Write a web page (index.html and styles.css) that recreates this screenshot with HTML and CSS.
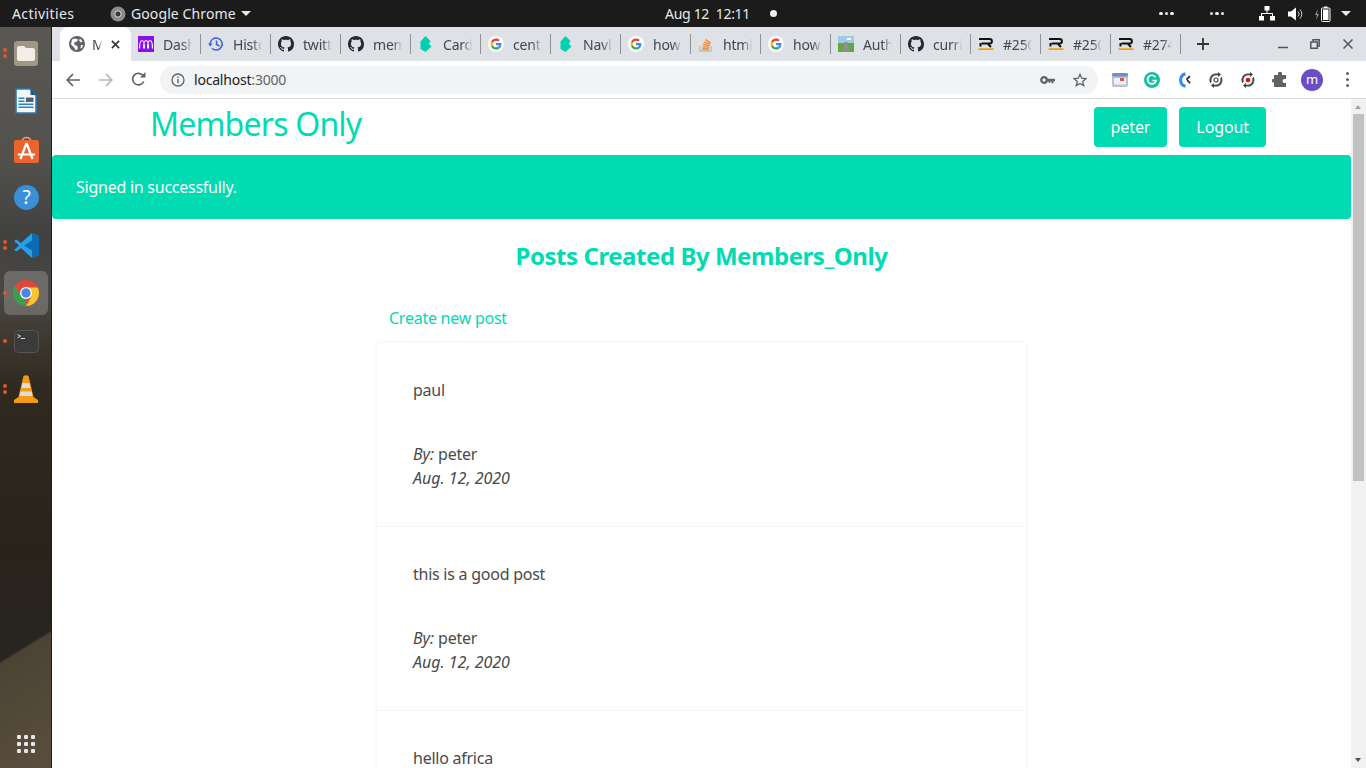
FILE: index.html
```html
<!DOCTYPE html>
<html lang="en">

<head>
    <meta charset="UTF-8">
    <title>Members Only</title>
    <link rel="stylesheet" href="styles.css">
</head>

<body>
    <svg class="defs" width="0" height="0">
        <symbol id="i-github" viewBox="0 0 16 16"><path fill="#24292e" d="M8 0C3.58 0 0 3.58 0 8c0 3.54 2.29 6.53 5.47 7.59.4.07.55-.17.55-.38 0-.19-.01-.82-.01-1.49-2.01.37-2.53-.49-2.69-.94-.09-.23-.48-.94-.82-1.13-.28-.15-.68-.52-.01-.53.63-.01 1.08.58 1.23.82.72 1.21 1.87.87 2.33.66.07-.52.28-.87.51-1.07-1.78-.2-3.64-.89-3.64-3.95 0-.87.31-1.59.82-2.15-.08-.2-.36-1.02.08-2.12 0 0 .67-.21 2.2.82.64-.18 1.32-.27 2-.27.68 0 1.36.09 2 .27 1.53-1.04 2.2-.82 2.2-.82.44 1.1.16 1.92.08 2.12.51.56.82 1.27.82 2.15 0 3.07-1.87 3.75-3.65 3.95.29.25.54.73.54 1.48 0 1.07-.01 1.93-.01 2.2 0 .21.15.46.55.38A8.013 8.013 0 0016 8c0-4.42-3.58-8-8-8z"/></symbol>
        <symbol id="i-google" viewBox="0 0 16 16"><circle cx="8" cy="8" r="8" fill="#fff"/><g transform="translate(2.5 2.5) scale(.23)"><path fill="#ea4335" d="M24 9.5c3.5 0 6.700 1.200 9.200 3.600l6.900-6.900C35.900 2.400 30.500 0 24 0 14.600 0 6.500 5.400 2.600 13.200l8 6.200C12.400 13.700 17.700 9.500 24 9.500z"/><path fill="#4285f4" d="M47 24.500c0-1.600-.1-3.100-.4-4.500H24v9h12.900c-.6 3-2.200 5.500-4.700 7.200l7.700 6c4.500-4.200 7.100-10.300 7.100-17.700z"/><path fill="#fbbc05" d="M10.600 28.600c-.5-1.400-.8-3-.8-4.600s.3-3.200.8-4.600l-8-6.200C.9 16.500 0 20.100 0 24s.9 7.500 2.600 10.800l8-6.200z"/><path fill="#34a853" d="M24 48c6.500 0 11.900-2.100 15.900-5.800l-7.700-6c-2.200 1.400-4.900 2.300-8.200 2.300-6.300 0-11.600-4.200-13.400-10l-8 6.200C6.500 42.600 14.600 48 24 48z"/></g></symbol>
        <symbol id="i-bulma" viewBox="0 0 16 16"><path fill="#00d1b2" d="M7.500 0 12.500 5 10.800 7.700 13.500 10.500 7.500 16 2.500 13 2.500 5.500z"/></symbol>
        <symbol id="i-rails" viewBox="0 0 16 16"><g fill="none" stroke="#111" stroke-width="2"><path d="M1 3h10.500c3.200 0 3.200 4.600 0 4.600H3.500"/><path d="M2.500 7v3.500M10 8l3 3"/></g><rect x="0.500" y="12.300" width="15" height="1.700" fill="#f59b00"/></symbol>
        <symbol id="i-refresh" viewBox="0 0 16 16"><g fill="none" stroke="#444" stroke-width="1.900"><path d="M3 10.500A5.600 5.600 0 0 1 8 2.400h2.500"/><path d="M13 5.500a5.600 5.600 0 0 1-5 8.100H5.500"/></g><path fill="#444" d="M10 0l3 2.400L10 5zM6 11l-3 2.600L6 16z"/></symbol>
    </svg>

    <div class="topbar">
        <span class="activities">Activities</span>
        <span class="app-menu">
            <svg width="16" height="16" viewBox="0 0 16 16"><circle cx="8" cy="8" r="7.500" fill="#8c8c8c"/><circle cx="8" cy="8" r="3.200" fill="#3a3a3a" stroke="#ddd" stroke-width="1"/></svg>
            Google Chrome
            <i class="caret"></i>
        </span>
        <span class="clock">Aug 12&nbsp; 12:11</span>
        <i class="clock-dot"></i>
        <div class="tray">
            <span class="tray-dots"><i></i><i></i><i></i></span>
            <span class="tray-dots second"><i></i><i></i><i></i></span>
            <svg width="16" height="15" viewBox="0 0 16 15" fill="#fff"><rect x="5.500" y="0" width="5" height="4.500"/><rect x="0" y="10" width="5" height="4.500"/><rect x="11" y="10" width="5" height="4.500"/><path d="M7.500 4h1v3h5.500v3h-1V8H3v2H2V7h5.500z"/></svg>
            <svg class="vol" width="16" height="14" viewBox="0 0 16 14"><path fill="#fff" d="M0 4.500h3L8 .5v13l-5-4H0z"/><path fill="none" stroke="#ccc" d="M10 4.500a3.500 3.500 0 0 1 0 5M12 2.500a6.500 6.500 0 0 1 0 9"/></svg>
            <svg class="batt" width="16" height="16" viewBox="0 0 16 16"><path fill="#999" d="M3 3 0 9h2l-1 5 3-6H2z"/><rect x="6.500" y="2" width="8.500" height="13.500" rx="1" fill="none" stroke="#fff"/><rect x="9" y=".5" width="3.500" height="1.500" fill="#fff"/><rect x="8" y="3.500" width="5.500" height="10.500" fill="#fff"/></svg>
            <i class="caret tray-caret"></i>
        </div>
    </div>

    <div class="desktop">
        <nav class="dock">
            <div class="dock-item">
                <i class="pips"><b></b><b></b></i>
                <svg width="24" height="25" viewBox="0 0 24 25"><rect width="24" height="25" rx="3" fill="#a09684"/><path fill="#f1eee8" d="M3 7c0-1 1-2 2-2h5l2 2h7c1 0 2 1 2 2v9c0 1-1 2-2 2H5c-1 0-2-1-2-2z"/></svg>
            </div>
            <div class="dock-item">
                <svg width="22" height="26" viewBox="0 0 22 26"><path fill="#f4f7fa" stroke="#2a7cb5" stroke-width="1.600" d="M1 1h14l6 6.500V25H1z"/><path fill="#17608f" d="M15.500 1l6 6h-6z"/><path fill="#2a84bf" d="M3.500 9.500h6V11h-6zM3.500 12.500h6V14h-6zM3.500 15.500h15V17h-15zM3.500 18.500h15V20h-15z"/><rect x="11" y="9.500" width="7.500" height="4.500" fill="#56606a"/></svg>
            </div>
            <div class="dock-item">
                <svg width="25" height="27" viewBox="0 0 25 27"><path fill="none" stroke="#f0a080" stroke-width="1.500" d="M8 6c0-6 9-6 9 0"/><rect y="4" width="25" height="23" rx="2" fill="#ea6430"/><path fill="none" stroke="#fff" stroke-width="2.200" d="M12.500 7 6.500 23M12.500 7l6 16M4 18.500h17"/></svg>
            </div>
            <div class="dock-item">
                <svg width="25" height="25" viewBox="0 0 25 25"><circle cx="12.500" cy="12.500" r="12.500" fill="#3a8fd6"/><text class="help-mark" x="12.500" y="19" text-anchor="middle">?</text></svg>
            </div>
            <div class="dock-item">
                <i class="pips"><b></b><b></b></i>
                <svg width="25" height="25" viewBox="0 0 25 25"><path fill="#2a9fe6" d="M18 0 25 3v19l-7 3-11-10-4.500 3.500L0 17l5-4.500L0 8l2.500-1.500L7 10z"/><path fill="#0b6cb5" d="M18 0 25 3v19l-7 3V7.500L10 12.500l8 5z"/></svg>
            </div>
            <div class="dock-item current">
                <i class="pips"><b></b></i>
                <svg width="26" height="26" viewBox="0 0 26 26"><circle cx="13" cy="13" r="13" fill="#e0463a"/><path fill="#f7c52d" d="M13 7.500h11.800A13 13 0 0 1 13 26l5-9z"/><path fill="#36a24f" d="M13 26A13 13 0 0 1 2 6l6 10.500 5 2.500z"/><circle cx="13" cy="13" r="6" fill="#fff"/><circle cx="13" cy="13" r="4.700" fill="#4a86e8"/></svg>
            </div>
            <div class="dock-item">
                <i class="pips"><b></b></i>
                <svg width="25" height="23" viewBox="0 0 25 23"><rect x=".5" y=".5" width="24" height="22" rx="4" fill="#3b3b3c" stroke="#565656" stroke-width="1"/><path fill="none" stroke="#ddd" d="M3.500 4.500l3 1.700-3 1.700M7 8.500h4"/></svg>
            </div>
            <div class="dock-item">
                <i class="pips"><b></b><b></b></i>
                <svg width="24" height="28" viewBox="0 0 24 28"><path fill="#f59a14" d="M9.500 1c1.500-1 3.500-1 5 0l5 21 4.500 3 0 3H0v-3l4.500-3z"/><path fill="#dcdcd8" d="M8.600 8h6.800l1.300 5H7.300zM6.500 16.500h11l1 4.500h-13z"/></svg>
            </div>
            <div class="apps-grid">
                <i></i><i></i><i></i><i></i><i></i><i></i><i></i><i></i><i></i>
            </div>
        </nav>

        <div class="browser">
            <div class="tabstrip">
                <div class="tab active">
                    <svg width="16" height="16" viewBox="0 0 16 16"><circle cx="8" cy="8" r="8" fill="#5f6368"/><path fill="#fff" d="M3 3.500l3-1 3 1-1 2-3 1 1 3h2l1 3-2 2-2-3-3-3zM11 2.500l2.500 3-1.500 1-2-2zM12 9h2l-1 3-1.500.5z"/></svg>
                    <span class="tab-title">M</span>
                    <svg class="tab-close" width="9" height="9" viewBox="0 0 10 10"><path stroke="#333" stroke-width="1.800" d="M1 1l8 8M9 1l-8 8"/></svg>
                </div>
                <div class="tab">
                    <svg width="16" height="16" viewBox="0 0 16 16"><rect width="16" height="16" fill="#8a0ff0"/><path fill="none" stroke="#fff" stroke-width="1.200" d="M1.500 12.500c0-4 1-8 2.500-8s2.500 4 2.500 8M5.500 12.500c0-4 1-8 2.500-8s2.500 4 2.500 8M9.500 12.500c0-4 1-8 2.500-8s2.500 4 2.500 8"/></svg>
                    <span class="tab-title">Dash</span>
                </div>
                <div class="tab">
                    <svg width="16" height="16" viewBox="0 0 16 16"><g fill="none" stroke="#3b5fe0" stroke-width="1.500"><path d="M2.200 8a6 6 0 1 1 1.800 4.300"/><path d="M8.500 4.500V8.500l3 1.500"/></g><path fill="#3b5fe0" d="M0 7.500h4.500L2.200 10.500z"/></svg>
                    <span class="tab-title">Histo</span>
                </div>
                <div class="tab">
                    <svg width="16" height="16"><use href="#i-github"/></svg>
                    <span class="tab-title">twitt</span>
                </div>
                <div class="tab">
                    <svg width="16" height="16"><use href="#i-github"/></svg>
                    <span class="tab-title">mem</span>
                </div>
                <div class="tab">
                    <svg width="16" height="16"><use href="#i-bulma"/></svg>
                    <span class="tab-title">Card</span>
                </div>
                <div class="tab">
                    <svg width="16" height="16"><use href="#i-google"/></svg>
                    <span class="tab-title">cent</span>
                </div>
                <div class="tab">
                    <svg width="16" height="16"><use href="#i-bulma"/></svg>
                    <span class="tab-title">Navb</span>
                </div>
                <div class="tab">
                    <svg width="16" height="16"><use href="#i-google"/></svg>
                    <span class="tab-title">how</span>
                </div>
                <div class="tab">
                    <svg width="16" height="16" viewBox="0 0 16 16"><path fill="none" stroke="#bcbbbb" stroke-width="1.300" d="M2 10v5h11v-5"/><path fill="none" stroke="#f48024" stroke-width="1.300" d="M4.200 13h6.800M4.400 10.800l6.800.4M4.800 8.400l6.700 1.200M5.800 6l6.200 2.200M7.500 3.600l5.200 3.400"/></svg>
                    <span class="tab-title">html</span>
                </div>
                <div class="tab">
                    <svg width="16" height="16"><use href="#i-google"/></svg>
                    <span class="tab-title">how</span>
                </div>
                <div class="tab">
                    <svg width="16" height="16" viewBox="0 0 16 16"><rect width="16" height="7" fill="#9ccbe8"/><rect y="7" width="16" height="9" fill="#5eaa3c"/><path fill="#8f8f8f" d="M6.500 6h3L12 16H4z"/><rect x="9" y="2" width="4" height="2" fill="#fff"/></svg>
                    <span class="tab-title">Auth</span>
                </div>
                <div class="tab">
                    <svg width="16" height="16"><use href="#i-github"/></svg>
                    <span class="tab-title">curri</span>
                </div>
                <div class="tab">
                    <svg width="16" height="16"><use href="#i-rails"/></svg>
                    <span class="tab-title">#250</span>
                </div>
                <div class="tab">
                    <svg width="16" height="16"><use href="#i-rails"/></svg>
                    <span class="tab-title">#250</span>
                </div>
                <div class="tab">
                    <svg width="16" height="16"><use href="#i-rails"/></svg>
                    <span class="tab-title">#274</span>
                </div>
                <svg class="new-tab" width="12" height="12" viewBox="0 0 12 12"><path stroke="#333" stroke-width="1.800" d="M6 0v12M0 6h12"/></svg>
                <svg class="win-min" width="10" height="10" viewBox="0 0 10 10"><path stroke="#555" stroke-width="1.500" d="M0 8.500h10"/></svg>
                <svg class="win-max" width="10" height="10" viewBox="0 0 10 10"><path fill="none" stroke="#555" stroke-width="1.500" d="M3 2.500V.8h6.200V7H7.500M.8 3h6.500v6.200H.8z"/></svg>
                <svg class="win-close" width="10" height="10" viewBox="0 0 10 10"><path stroke="#555" stroke-width="1.500" d="M.5.500l9 9M9.500.500l-9 9"/></svg>
            </div>

            <div class="toolbar">
                <svg class="nav-back" width="14" height="14" viewBox="0 0 14 14"><path fill="none" stroke="#5f6368" stroke-width="1.700" d="M14 7H1.500M7 1 1.200 7 7 13"/></svg>
                <svg class="nav-fwd" width="14" height="14" viewBox="0 0 14 14"><path fill="none" stroke="#b4b6b8" stroke-width="1.700" d="M0 7h12.500M7 1l5.800 6L7 13"/></svg>
                <svg class="nav-reload" width="15" height="15" viewBox="0 0 15 15"><path fill="none" stroke="#5f6368" stroke-width="1.700" d="M12.700 9.500A5.800 5.800 0 1 1 12 3.500"/><path fill="#5f6368" d="M9 5.500h5.500V0z"/></svg>
                <div class="omnibox">
                    <svg width="14" height="14" viewBox="0 0 14 14"><circle cx="7" cy="7" r="6" fill="none" stroke="#5f6368" stroke-width="1.300"/><path stroke="#5f6368" stroke-width="1.400" d="M7 6v4.300M7 3.500v1.500"/></svg>
                    <span class="url">localhost<span class="url-port">:3000</span></span>
                    <svg class="omni-key" width="15" height="8" viewBox="0 0 15 8"><circle cx="4" cy="4" r="2.800" fill="none" stroke="#5f6368" stroke-width="2.200"/><path fill="#5f6368" d="M6.500 2.800H15v2.500h-1.500v2h-2v-2h-1v1.500h-2V5.300H6.500z"/></svg>
                    <svg class="omni-star" width="14" height="14" viewBox="0 0 14 14"><path fill="none" stroke="#5f6368" stroke-width="1.300" d="M7 1.200 8.700 5.200l4.300.4-3.300 2.800 1 4.200L7 10.400l-3.700 2.200 1-4.200L1 5.600l4.300-.4z"/></svg>
                </div>
                <div class="extensions">
                    <svg width="16" height="14" viewBox="0 0 16 14"><rect width="16" height="14" rx="2" fill="#b9c3d8"/><rect width="16" height="3.500" rx="1.500" fill="#6f8fc9"/><rect x="2" y="5" width="12" height="6.500" fill="#f2f2f2"/><rect x="8" y="5" width="4" height="3" fill="#d9534f"/></svg>
                    <svg width="16" height="16" viewBox="0 0 16 16"><circle cx="8" cy="8" r="8" fill="#15c39a"/><path fill="none" stroke="#fff" stroke-width="1.700" d="M11.500 5.200a4.300 4.300 0 1 0 .6 3.300H8.500"/></svg>
                    <svg width="16" height="16" viewBox="0 0 16 16"><path fill="none" stroke="#2e8ef0" stroke-width="3" d="M9.500 1.700a6.500 6.500 0 0 0 0 12.600"/><path fill="#222" d="M13.300 3.500l1.200 1.200-3.500 3.500-1.200-1.200zM10.500 8.500l1.200-1 3 3-1.200 1.200z"/></svg>
                    <svg width="16" height="16"><use href="#i-refresh"/><circle cx="8" cy="8" r="2" fill="none" stroke="#444" stroke-width="1.200"/></svg>
                    <svg width="16" height="16"><use href="#i-refresh"/><circle cx="8" cy="8" r="2.300" fill="#f00"/></svg>
                    <svg width="16" height="16" viewBox="0 0 16 16"><path fill="#5f6368" d="M6 1.500a2 2 0 0 1 4 0V3h4v4h-1.500a2 2 0 0 0 0 4H14v4H2v-4.500H.8a2 2 0 0 1 0-3.500H2V3h4z"/></svg>
                    <span class="avatar">m</span>
                    <span class="kebab"><i></i><i></i><i></i></span>
                </div>
            </div>

            <div class="viewport">
                <main class="page">
                    <header class="navbar">
                        <a class="brand">Members Only</a>
                        <div class="nav-actions">
                            <a class="btn">peter</a>
                            <a class="btn">Logout</a>
                        </div>
                    </header>
                    <div class="notice">Signed in successfully.</div>
                    <h1 class="page-title">Posts Created By Members_Only</h1>
                    <section class="posts">
                        <a class="new-post">Create new post</a>
                        <div class="card">
                            <article class="post">
                                <p class="post-body">paul</p>
                                <p class="post-meta"><em>By:</em> peter</p>
                                <p class="post-meta"><em>Aug. 12, 2020</em></p>
                            </article>
                            <article class="post">
                                <p class="post-body">this is a good post</p>
                                <p class="post-meta"><em>By:</em> peter</p>
                                <p class="post-meta"><em>Aug. 12, 2020</em></p>
                            </article>
                            <article class="post">
                                <p class="post-body">hello africa</p>
                            </article>
                        </div>
                    </section>
                </main>
                <div class="scrollbar">
                    <i class="arrow-up"></i>
                    <div class="thumb"></div>
                    <i class="arrow-down"></i>
                </div>
            </div>
        </div>
    </div>
</body>

</html>
```

FILE: styles.css
```css
* {
    box-sizing: border-box;
}

body {
    margin: 0;
    width: 1366px;
    height: 768px;
    overflow: hidden;
    display: flex;
    flex-direction: column;
    font-family: 'Noto Sans', 'Open Sans', sans-serif;
    background: #1b1b1b;
}

.defs {
    position: absolute;
}

svg {
    display: block;
    flex: none;
}

/* ---- gnome top bar ---- */
.topbar {
    height: 27px;
    flex: none;
    display: flex;
    align-items: center;
    background: #1b1b1b;
    color: #e8e8e8;
    font-size: 14px;
    letter-spacing: -0.3px;
}

.activities {
    margin-left: 12px;
    width: 98px;
    letter-spacing: 0.4px;
}

.app-menu {
    display: flex;
    align-items: center;
    gap: 5px;
    width: 555px;
    letter-spacing: 0.1px;
}

.caret {
    display: block;
    width: 0;
    height: 0;
    border-left: 5px solid transparent;
    border-right: 5px solid transparent;
    border-top: 5px solid #e8e8e8;
}

.clock {
    width: 105px;
    white-space: nowrap;
}

.clock-dot {
    width: 7px;
    height: 7px;
    border-radius: 50%;
    background: #eee;
}

.tray {
    display: flex;
    align-items: center;
    margin-left: auto;
    margin-right: 15px;
}

.tray-dots {
    display: flex;
    gap: 2px;
    margin-right: 36px;
}

.tray-dots.second {
    margin-right: 35px;
}

.tray-dots i {
    width: 3.500px;
    height: 3.500px;
    border-radius: 50%;
    background: #eee;
}

.vol {
    margin-left: 13px;
}

.batt {
    margin-left: 11px;
}

.tray-caret {
    margin-left: 10px;
}

/* ---- dock ---- */
.desktop {
    flex: 1;
    display: flex;
    min-height: 0;
}

.dock {
    width: 52px;
    flex: none;
    position: relative;
    display: flex;
    flex-direction: column;
    padding-top: 2px;
    border-right: 1px solid #1d1d1c;
    background:
        linear-gradient(148.400deg, transparent 540px, #4c4334 543px, #5a4f3e 100%),
        linear-gradient(to bottom, #5a5853 0, #52514d 130px, #414140 210px, #4a4844 270px, #3e3930 310px, #30291f 360px, #2a231c 520px, #282521 640px);
}

.dock-item {
    position: relative;
    width: 44px;
    height: 44px;
    margin: 2px 4px;
    border-radius: 6px;
    display: flex;
    align-items: center;
    justify-content: center;
}

.dock-item.current {
    background: rgba(255, 255, 255, 0.2);
}

.pips {
    position: absolute;
    left: -1px;
    top: 0;
    bottom: 0;
    display: flex;
    flex-direction: column;
    justify-content: center;
    gap: 2px;
}

.pips b {
    width: 4px;
    height: 4px;
    border-radius: 50%;
    background: #e95420;
}

.help-mark {
    font-size: 19px;
    fill: #fff;
}

.apps-grid {
    margin: auto 0 0 17px;
    padding-bottom: 15px;
    width: 18px;
    display: grid;
    grid-template-columns: repeat(3, 4px);
    gap: 3px;
}

.apps-grid i {
    height: 4px;
    background: #e6e6e6;
    border-radius: 1px;
}

/* ---- chrome ---- */
.browser {
    flex: 1;
    min-width: 0;
    display: flex;
    flex-direction: column;
    background: #fff;
}

.tabstrip {
    height: 34px;
    flex: none;
    display: flex;
    align-items: center;
    padding-left: 8px;
    background: #dee1e6;
}

.tab {
    position: relative;
    width: 70px;
    height: 34px;
    flex: none;
    display: flex;
    align-items: center;
    gap: 9px;
    padding-left: 7px;
}

.tab::after {
    content: "";
    position: absolute;
    right: 0;
    top: 7px;
    height: 20px;
    width: 1px;
    background: #8e9094;
}

.tab-title {
    width: 32px;
    white-space: nowrap;
    font-size: 14px;
    letter-spacing: -0.2px;
    color: #45474a;
    -webkit-mask-image: linear-gradient(to right, #000 60%, transparent 92%);
    mask-image: linear-gradient(to right, #000 60%, transparent 92%);
}

.tab.active {
    width: 71px;
    padding-left: 9px;
    gap: 7px;
    background: #fff;
    border-radius: 8px 8px 0 0;
}

.tab.active::after {
    display: none;
}

.tab.active .tab-title {
    width: 11px;
}

.tab-close {
    margin-left: 1px;
}

.new-tab {
    margin-left: 16px;
}

.win-min {
    margin-left: 69px;
}

.win-max {
    margin-left: 22px;
}

.win-close {
    margin-left: 23px;
}

.toolbar {
    height: 38px;
    flex: none;
    display: flex;
    align-items: center;
    border-bottom: 1px solid #d9d9d9;
    background: #fff;
}

.nav-back {
    margin-left: 14px;
}

.nav-fwd {
    margin-left: 19px;
}

.nav-reload {
    margin-left: 18px;
}

.omnibox {
    width: 938px;
    height: 28px;
    margin-left: 14px;
    padding: 0 11px;
    flex: none;
    display: flex;
    align-items: center;
    border-radius: 14px;
    background: #f1f3f4;
}

.url {
    margin-left: 9px;
    font-size: 14px;
    letter-spacing: -0.2px;
    color: #202124;
}

.url-port {
    color: #5f6368;
}

.omni-key {
    margin-left: auto;
}

.omni-star {
    margin-left: 18px;
}

.extensions {
    display: flex;
    align-items: center;
    gap: 16px;
    margin-left: 14px;
}

.avatar {
    width: 22px;
    height: 22px;
    margin-left: -3px;
    border-radius: 50%;
    background: #6a4fc4;
    color: #fff;
    font-size: 13px;
    line-height: 20px;
    text-align: center;
}

.kebab {
    display: flex;
    flex-direction: column;
    gap: 3px;
    margin-left: 7px;
}

.kebab i {
    width: 3px;
    height: 3px;
    border-radius: 50%;
    background: #5f6368;
}

/* ---- the page itself ---- */
.viewport {
    flex: 1;
    min-height: 0;
    display: flex;
}

.page {
    flex: 1;
    min-width: 0;
    overflow: hidden;
    color: #4a4a4a;
    font-size: 16px;
    letter-spacing: -0.25px;
}

.page em {
    letter-spacing: 0;
}

.navbar {
    height: 56px;
    display: flex;
    padding: 8px 85px 8px 98px;
    justify-content: space-between;
}

.brand {
    font-size: 32px;
    line-height: 34px;
    color: #00dbb1;
    letter-spacing: -0.8px;
}

.nav-actions {
    display: flex;
    gap: 12px;
}

.btn {
    height: 40px;
    padding: 0 17px;
    border-radius: 4px;
    background: #00dbb1;
    color: #fff;
    line-height: 40px;
    letter-spacing: -0.1px;
}

.notice {
    height: 64px;
    padding-left: 24px;
    border-radius: 4px;
    background: #00dbb1;
    color: #fff;
    line-height: 64px;
}

.page-title {
    margin: 0;
    padding-top: 19px;
    height: 74px;
    text-align: center;
    font-size: 24px;
    line-height: 36px;
    font-weight: 700;
    color: #00dbb1;
    letter-spacing: -0.45px;
}

.posts {
    width: 649px;
    margin-left: 325px;
}

.new-post {
    display: block;
    height: 50px;
    padding: 13px 0 0 12px;
    line-height: 24px;
    color: #00dbb1;
}

.card {
    border-radius: 4px 4px 0 0;
    box-shadow: 0 0 4px rgba(10, 10, 10, 0.07);
}

.post {
    height: 184px;
    padding: 35px 36px 0;
    border-bottom: 1px solid #f5f5f5;
}

.post-meta,
.post-body {
    margin: 0;
    line-height: 24px;
}

.post-body {
    margin-bottom: 40px;
}

.scrollbar {
    position: relative;
    width: 15px;
    flex: none;
    background: #f1f1f1;
}

.thumb {
    position: absolute;
    top: 15px;
    left: 2px;
    width: 11px;
    height: 367px;
    background: #c1c1c1;
}

.arrow-up,
.arrow-down {
    position: absolute;
    left: 4px;
    width: 0;
    height: 0;
    border-left: 3.500px solid transparent;
    border-right: 3.500px solid transparent;
}

.arrow-up {
    top: 6px;
    border-bottom: 4px solid #a3a3a3;
}

.arrow-down {
    bottom: 6px;
    border-top: 4px solid #505050;
}
```
